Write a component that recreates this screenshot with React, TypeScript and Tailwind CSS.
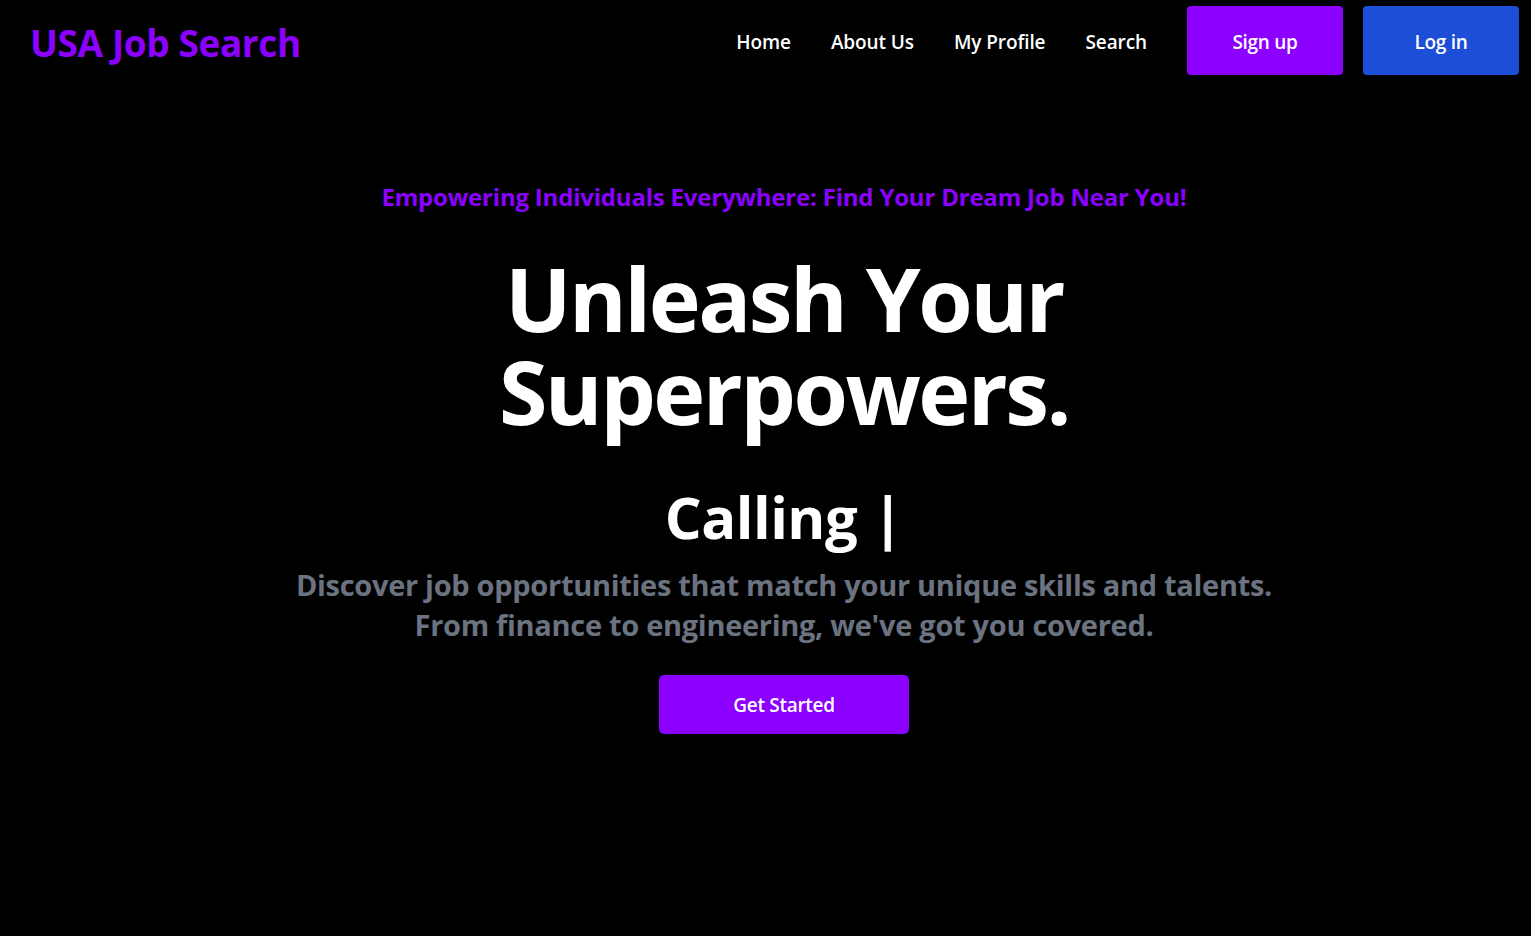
import { useEffect, useState } from 'react'

const navLinks = ['Home', 'About Us', 'My Profile', 'Search']

function Navbar() {
  return (
    <nav className="flex items-center justify-between pl-[30px] pr-3 pt-1.5">
      <a href="#" className="mt-1 text-[37px] font-bold text-[#8b00ff] tracking-[-0.4px]">
        USA Job Search
      </a>
      <div className="flex items-center">
        <ul className="flex items-center gap-10 mr-10 pt-1">
          {navLinks.map((link) => (
            <li key={link}>
              <a href="#" className="text-[19px] font-semibold text-white tracking-[-0.1px]">
                {link}
              </a>
            </li>
          ))}
        </ul>
        <div className="flex items-center gap-5">
          <button className="w-[156px] h-[69px] pt-1 rounded-[4px] bg-[#8b00ff] text-white text-[19px] font-semibold tracking-[-0.3px]">
            Sign up
          </button>
          <button className="w-[156px] h-[69px] pt-1 rounded-[4px] bg-[#1d4ed8] text-white text-[19px] font-semibold tracking-[-0.3px]">
            Log in
          </button>
        </div>
      </div>
    </nav>
  )
}

const words = ['Calling', 'Passion', 'Career']

export default function App() {
  const [word] = useState(words[0])

  useEffect(() => {
    document.body.style.background = '#000'
  }, [])

  return (
    <div className="min-h-screen bg-black font-['Open_Sans',sans-serif]">
      <Navbar />

      {/* Hero */}
      <section className="flex flex-col items-center text-center pl-[37px] pt-[104px]">
        <p className="text-[24px] font-bold text-[#8b00ff] tracking-[-0.2px]">
          Empowering Individuals Everywhere: Find Your Dream Job Near You!
        </p>
        <h1 className="mt-[37px] text-[88px] leading-[93px] font-bold text-white tracking-[-2.5px]">
          Unleash Your
          <br />
          Superpowers.
        </h1>
        <h2 className="mt-[43px] text-[58px] leading-[72px] font-bold text-white tracking-[-0.5px]">
          {word} |
        </h2>
        <p className="mt-[12px] text-[29px] leading-[40px] font-bold text-[#6b7280] tracking-[-0.3px]">
          Discover job opportunities that match your unique skills and talents.
          <br />
          From finance to engineering, we've got you covered.
        </p>
        <button className="mt-[30px] w-[250px] h-[59px] pt-0.5 rounded-[5px] bg-[#8b00ff] text-white text-[19px] font-semibold tracking-[-0.3px]">
          Get Started
        </button>
      </section>
    </div>
  )
}
